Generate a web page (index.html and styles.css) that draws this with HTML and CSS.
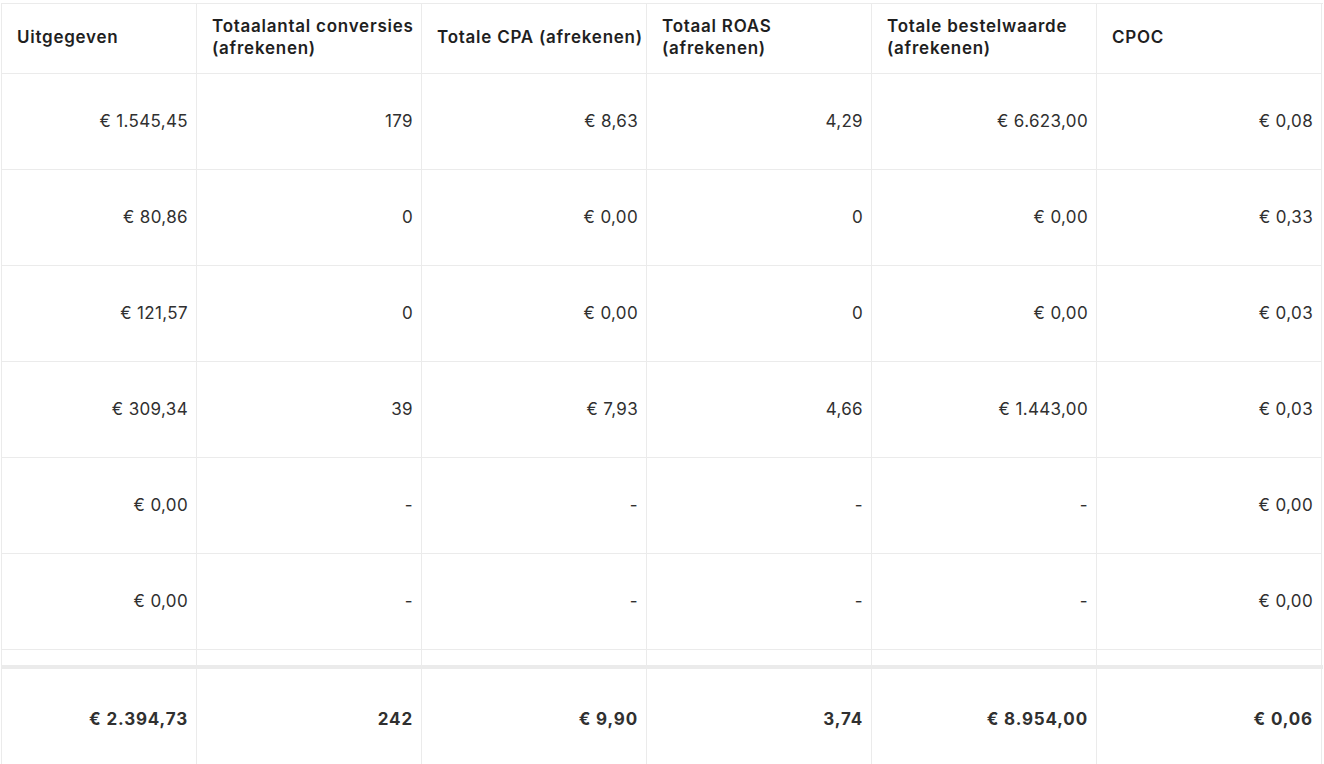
FILE: index.html
```html
<!DOCTYPE html>
<html lang="nl">
<head>
<meta charset="utf-8">
<title>Tabel</title>
<link rel="stylesheet" href="styles.css">
</head>
<body>
<div class="table">
  <div class="row head">
    <div class="cell">Uitgegeven</div>
    <div class="cell">Totaalantal conversies (afrekenen)</div>
    <div class="cell">Totale CPA (afrekenen)</div>
    <div class="cell">Totaal ROAS (afrekenen)</div>
    <div class="cell">Totale bestelwaarde (afrekenen)</div>
    <div class="cell">CPOC</div>
  </div>
  <div class="body">
    <div class="row">
      <div class="cell">€ 1.545,45</div>
      <div class="cell">179</div>
      <div class="cell">€ 8,63</div>
      <div class="cell">4,29</div>
      <div class="cell">€ 6.623,00</div>
      <div class="cell">€ 0,08</div>
    </div>
    <div class="row">
      <div class="cell">€ 80,86</div>
      <div class="cell">0</div>
      <div class="cell">€ 0,00</div>
      <div class="cell">0</div>
      <div class="cell">€ 0,00</div>
      <div class="cell">€ 0,33</div>
    </div>
    <div class="row">
      <div class="cell">€ 121,57</div>
      <div class="cell">0</div>
      <div class="cell">€ 0,00</div>
      <div class="cell">0</div>
      <div class="cell">€ 0,00</div>
      <div class="cell">€ 0,03</div>
    </div>
    <div class="row">
      <div class="cell">€ 309,34</div>
      <div class="cell">39</div>
      <div class="cell">€ 7,93</div>
      <div class="cell">4,66</div>
      <div class="cell">€ 1.443,00</div>
      <div class="cell">€ 0,03</div>
    </div>
    <div class="row">
      <div class="cell">€ 0,00</div>
      <div class="cell">-</div>
      <div class="cell">-</div>
      <div class="cell">-</div>
      <div class="cell">-</div>
      <div class="cell">€ 0,00</div>
    </div>
    <div class="row">
      <div class="cell">€ 0,00</div>
      <div class="cell">-</div>
      <div class="cell">-</div>
      <div class="cell">-</div>
      <div class="cell">-</div>
      <div class="cell">€ 0,00</div>
    </div>
    <div class="row">
      <div class="cell"></div>
      <div class="cell"></div>
      <div class="cell"></div>
      <div class="cell"></div>
      <div class="cell"></div>
      <div class="cell"></div>
    </div>
  </div>
  <div class="row foot">
    <div class="cell">€ 2.394,73</div>
    <div class="cell">242</div>
    <div class="cell">€ 9,90</div>
    <div class="cell">3,74</div>
    <div class="cell">€ 8.954,00</div>
    <div class="cell">€ 0,06</div>
  </div>
</div>
</body>
</html>
```

FILE: styles.css
```css
html, body {
  margin: 0;
  padding: 0;
  background: #ffffff;
  overflow: hidden;
}

body {
  font-family: Inter, "Liberation Sans", sans-serif;
  color: #303030;
}

.table {
  margin: 3px 0 0 1px;
  width: 1321px;
  border-top: 1px solid #ebebeb;
  border-left: 1px solid #ebebeb;
}

.row {
  display: grid;
  grid-template-columns: 195px repeat(5, 225px);
}

.cell {
  border-right: 1px solid #ebebeb;
  border-bottom: 1px solid #ebebeb;
  display: flex;
  align-items: center;
  justify-content: flex-end;
  padding: 0 8px 2px 8px;
  font-size: 17px;
  line-height: 20px;
  letter-spacing: 0.35px;
  height: 96px;
  box-sizing: border-box;
  white-space: nowrap;
}

.head .cell {
  height: 70px;
  justify-content: flex-start;
  padding: 0 0 3px 15px;
  font-weight: 600;
  line-height: 22px;
  letter-spacing: 0.75px;
  color: #1f1f1f;
  white-space: normal;
}

.body {
  height: 591px;
  overflow: hidden;
}

.foot .cell {
  border-bottom: none;
  font-weight: 700;
  letter-spacing: 0.85px;
  padding: 3px 8px 0 8px;
  height: 96px;
}

.foot {
  border-top: 4px solid #ebebeb;
}
```
